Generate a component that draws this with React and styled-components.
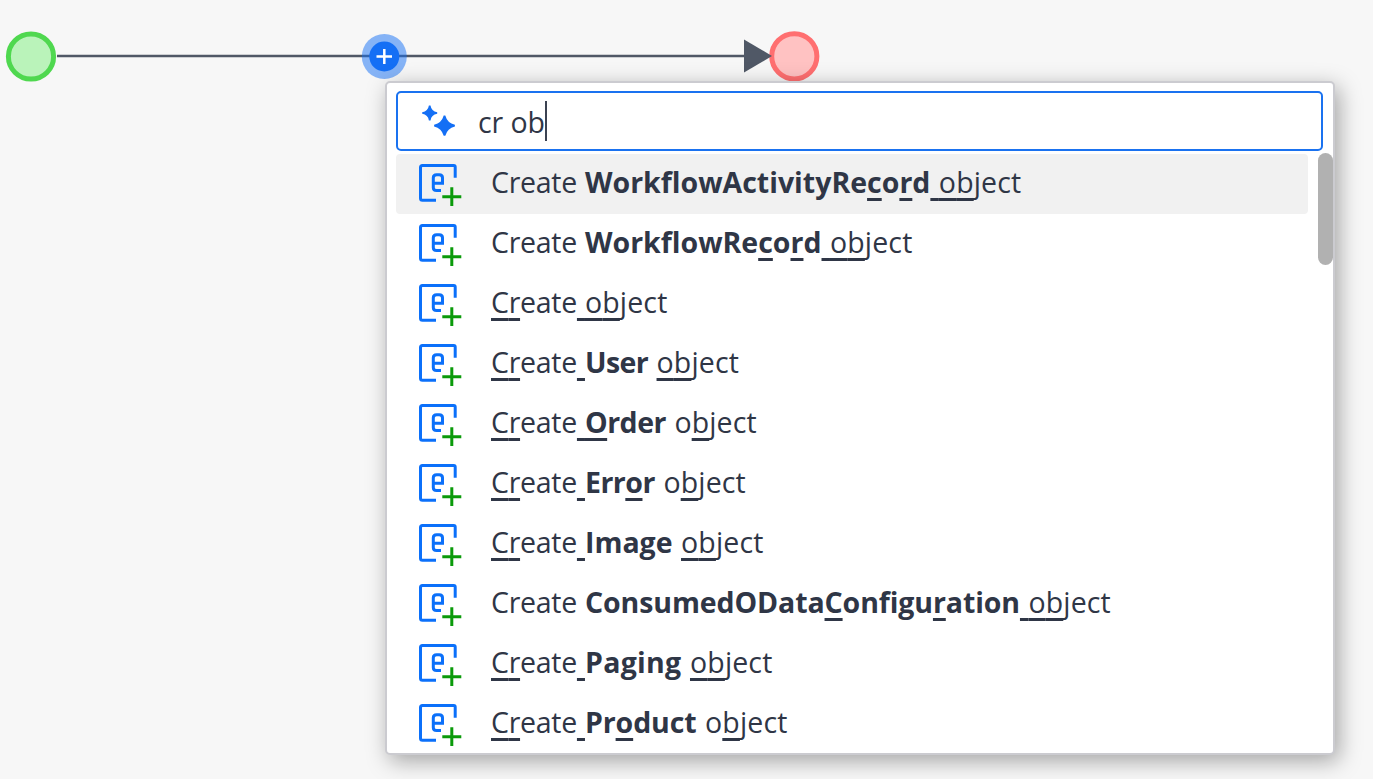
import React from "react";
import styled, { createGlobalStyle } from "styled-components";

const GlobalStyle = createGlobalStyle`
  * { box-sizing: border-box; }
  body {
    margin: 0;
    background: #f7f7f7;
    color: #2f3646;
    font-family: "Open Sans", "Noto Sans", sans-serif;
    overflow: hidden;
  }
`;

const Canvas = styled.main`
  position: relative;
  width: 100%;
  height: 779px;
  overflow: hidden;
`;

const Flow = styled.svg`
  display: block;
`;

const Menu = styled.section`
  position: absolute;
  left: 385px;
  top: 81px;
  width: 950px;
  height: 674px;
  padding: 8px 9px 0 9px;
  background: #fff;
  border: 2px solid #cbcbd0;
  border-radius: 5px;
  box-shadow: 4px 6px 22px rgba(0, 0, 0, 0.34);
`;

const SearchField = styled.div`
  display: flex;
  align-items: center;
  width: 927px;
  height: 60px;
  padding-left: 22px;
  border: 2px solid #1a72f0;
  border-radius: 5px;
`;

const SparkleIcon = styled.svg`
  flex: none;
  margin-right: 22px;
`;

const Query = styled.span`
  padding-top: 1px;
  font-size: 28.5px;
  font-weight: 400;
  line-height: 40px;
  letter-spacing: -0.1px;
  white-space: pre;
`;

const Caret = styled.span`
  width: 2px;
  height: 40px;
  background: #3b4252;
`;

const Results = styled.div`
  display: flex;
  justify-content: space-between;
  height: 600px;
  margin: 3px -9px 0 0;
`;

const List = styled.ul`
  width: 912px;
  margin: 0;
  padding: 0;
  list-style: none;
`;

const Row = styled.li`
  display: flex;
  align-items: center;
  height: 60px;
  padding-left: 22px;
  border-radius: 4px;
  background: ${(p) => (p.$active ? "#f1f1f1" : "transparent")};
`;

const EntityIcon = styled.svg`
  flex: none;
  margin-right: 28px;
`;

const Label = styled.span`
  padding-bottom: 4px;
  font-size: 28.5px;
  line-height: 40px;
  white-space: pre;
`;

const Word = styled.span`
  display: inline-block;
  font-weight: ${(p) => (p.$bold ? 700 : 400)};
  letter-spacing: ${(p) => p.$spacing}px;
  word-spacing: 0.9px;
`;

const Match = styled.span`
  text-decoration: underline;
  text-decoration-thickness: 3px;
  text-underline-offset: 5px;
  text-decoration-skip-ink: none;
`;

const ScrollThumb = styled.div`
  width: 15px;
  height: 112px;
  margin-top: -1px;
  border-radius: 8px;
  background: #b1b1b1;
`;

// Underscore precedes every matched character.
const rows = [
  { start: "Create ", name: "WorkflowActivityRe_co_rd", end: "_ _o_bject", spacing: 0 },
  { start: "Create ", name: "WorkflowRe_co_rd", end: "_ _o_bject", spacing: 0 },
  { start: "_C_reate_ ", name: "", end: "_o_bject", spacing: 0 },
  { start: "_C_reate_ ", name: "User", end: " _o_bject", spacing: -0.6 },
  { start: "_C_reate_ ", name: "_Order", end: " o_bject", spacing: -0.5 },
  { start: "_C_reate_ ", name: "Err_or", end: " o_bject", spacing: -0.5 },
  { start: "_C_reate_ ", name: "Image", end: " _o_bject", spacing: 0 },
  { start: "Create ", name: "ConsumedOData_Configu_ration", end: "_ _o_bject", spacing: -0.1 },
  { start: "_C_reate_ ", name: "Paging", end: " _o_bject", spacing: 0.3 },
  { start: "_C_reate_ ", name: "Pr_oduct", end: " o_bject", spacing: -0.1 },
];

const highlight = (text) =>
  text
    .split(/(_.)/)
    .filter(Boolean)
    .map((part, i) => (part[0] === "_" ? <Match key={i}>{part[1]}</Match> : part));

function CreateObjectIcon() {
  return (
    <EntityIcon width="45" height="44" viewBox="0 0 45 44" fill="none">
      <path d="M37.2 15.7V5Q37.2 3.5 35.7 3.5H4.5Q2.5 3.5 2.5 5.5V36.2Q2.5 38.2 4.5 38.2H18" stroke="#0b70fa" strokeWidth="3" />
      <path d="M23 28.5H18.7Q15.3 28.5 15.3 25.5V15.8Q15.3 12.8 18.7 12.8H21.2Q24.5 12.8 24.5 15.8V21.2H15.3" stroke="#0b70fa" strokeWidth="3" />
      <path d="M24.3 34.8H43.3M33.8 25.3V44" stroke="#0a9a0a" strokeWidth="3" />
    </EntityIcon>
  );
}

export default function App() {
  return (
    <Canvas>
      <GlobalStyle />
      <Flow width="860" height="84" viewBox="0 0 860 84">
        <path d="M57 56H748" stroke="#505866" strokeWidth="2.5" />
        <circle cx="31" cy="56.5" r="22.6" fill="#baf3ba" stroke="#4fd84f" strokeWidth="5" />
        <circle cx="794.3" cy="56.3" r="22.6" fill="#ffc2c2" stroke="#ff6f70" strokeWidth="5" />
        <path d="M744 39.5L772 56L744 72.5Z" fill="#505866" />
        <circle cx="384.3" cy="56.5" r="22.5" fill="#146ff5" fillOpacity="0.5" />
        <circle cx="384.3" cy="56.5" r="15" fill="#146ff5" />
        <path d="M376.5 56.5H392M384.3 49V64" stroke="#fff" strokeWidth="2.5" />
      </Flow>
      <Menu>
        <SearchField>
          <SparkleIcon width="36" height="36" viewBox="0 0 36 36" fill="#146ff5">
            <path d="M8.9 2.5H10.5Q11.4 8.3 17.2 9.2V10.8Q11.4 11.7 10.5 17.5H8.9Q8 11.7 2.2 10.8V9.2Q8 8.3 8.9 2.5Z" />
            <path d="M23.7 12.5H25.3Q27.3 20 34.9 21.8V23.4Q27.3 25.2 25.3 32.8H23.7Q21.7 25.2 14.1 23.4V21.8Q21.7 20 23.7 12.5Z" />
          </SparkleIcon>
          <Query>cr ob</Query>
          <Caret />
        </SearchField>
        <Results>
          <List>
            {rows.map((row, i) => (
              <Row key={i} $active={i === 0}>
                <CreateObjectIcon />
                <Label>
                  <Word $spacing={-0.28}>{highlight(row.start)}</Word>
                  {row.name && <Word $bold $spacing={row.spacing}>{highlight(row.name)}</Word>}
                  <Word $spacing={0.15}>{highlight(row.end)}</Word>
                </Label>
              </Row>
            ))}
          </List>
          <ScrollThumb />
        </Results>
      </Menu>
    </Canvas>
  );
}
